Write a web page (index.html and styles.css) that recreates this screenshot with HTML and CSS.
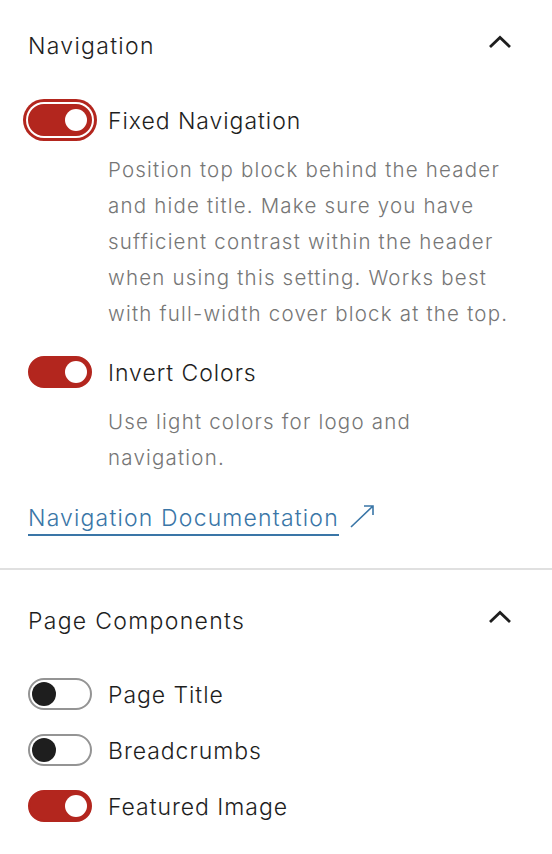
FILE: index.html
```html
<!DOCTYPE html>
<html>
<head>
<meta charset="utf-8">
<link rel="stylesheet" href="styles.css">
</head>
<body>
<div class="sidebar">
  <section class="panel panel-first">
    <div class="panel-header">
      <span class="panel-title">Navigation</span>
      <svg class="chevron" width="24" height="14" viewBox="0 0 24 14"><polyline points="2,12 12,2.5 22,12" fill="none" stroke="#1e1e1e" stroke-width="2.8"/></svg>
    </div>
    <div class="panel-body">
      <div class="control">
        <div class="toggle-row">
          <span class="toggle on focused"><span class="thumb"></span></span>
          <span class="label">Fixed Navigation</span>
        </div>
        <p class="help">Position top block behind the header and hide title. Make sure you have sufficient contrast within the header when using this setting. Works best with full-width cover block at the top.</p>
      </div>
      <div class="control">
        <div class="toggle-row">
          <span class="toggle on"><span class="thumb"></span></span>
          <span class="label">Invert Colors</span>
        </div>
        <p class="help">Use light colors for logo and<br>navigation.</p>
      </div>
      <a class="doc-link" href="#"><span class="doc-text">Navigation Documentation</span><svg class="ext" width="26" height="24" viewBox="0 0 26 24"><path d="M2 23 L24 2 M15 2 H24 V11" fill="none" stroke="#3a76a7" stroke-width="1.6"/></svg></a>
    </div>
  </section>
  <section class="panel panel-second">
    <div class="panel-header">
      <span class="panel-title">Page Components</span>
      <svg class="chevron" width="24" height="14" viewBox="0 0 24 14"><polyline points="2,12 12,2.5 22,12" fill="none" stroke="#1e1e1e" stroke-width="2.8"/></svg>
    </div>
    <div class="panel-body list">
      <div class="toggle-row">
        <span class="toggle"><span class="thumb"></span></span>
        <span class="label">Page Title</span>
      </div>
      <div class="toggle-row">
        <span class="toggle"><span class="thumb"></span></span>
        <span class="label">Breadcrumbs</span>
      </div>
      <div class="toggle-row">
        <span class="toggle on"><span class="thumb"></span></span>
        <span class="label">Featured Image</span>
      </div>
    </div>
  </section>
</div>
</body>
</html>
```

FILE: styles.css
```css
html, body {
  margin: 0;
  padding: 0;
  background: #ffffff;
}
body {
  font-family: Inter, "Noto Sans", sans-serif;
  font-weight: 350;
  color: #1e1e1e;
}
.sidebar {
  width: 552px;
}
.panel {
  padding: 0 28px;
}
.panel-second {
  border-top: 2px solid #e0e0e0;
  padding-top: 5px;
}
.panel-first {
  padding-bottom: 32px;
}
.panel-header {
  height: 90px;
  display: flex;
  align-items: center;
  justify-content: space-between;
}
.panel-title {
  font-size: 23px;
  line-height: 30px;
  letter-spacing: 1.3px;
  padding-top: 1px;
}
.chevron {
  display: block;
  margin-right: 12px;
  margin-top: -6px;
}
.panel-body {
  display: flex;
  flex-direction: column;
}
.panel-first .panel-body {
  padding-top: 14px;
  gap: 24px;
}
.panel-second .panel-body {
  padding-top: 13px;
  gap: 24px;
  padding-bottom: 40px;
}
.control {
  display: flex;
  flex-direction: column;
  gap: 16px;
}
.toggle-row {
  display: flex;
  align-items: center;
  gap: 16px;
  height: 32px;
}
.toggle {
  position: relative;
  box-sizing: border-box;
  width: 64px;
  height: 32px;
  border-radius: 16px;
  border: 2px solid #949494;
  background: #ffffff;
  flex: none;
}
.toggle .thumb {
  position: absolute;
  top: 2px;
  left: 2px;
  width: 24px;
  height: 24px;
  border-radius: 50%;
  background: #1e1e1e;
}
.toggle.on {
  background: #b3261e;
  border-color: #b3261e;
}
.toggle.on .thumb {
  left: auto;
  right: 3px;
  top: 3px;
  width: 22px;
  height: 22px;
  background: #ffffff;
}
.toggle.focused {
  box-shadow: 0 0 0 2px #ffffff, 0 0 0 5px #b3261e;
}
.label {
  font-size: 23px;
  line-height: 32px;
  letter-spacing: 0.95px;
  padding-top: 1px;
}
.help {
  margin: 0 0 0 80px;
  max-width: 410px;
  font-size: 20.5px;
  line-height: 36px;
  letter-spacing: 1.2px;
  color: #767676;
}
.doc-link {
  display: flex;
  align-items: center;
  gap: 10px;
  height: 36px;
  color: #3a76a7;
  text-decoration: none;
  font-size: 23px;
  letter-spacing: 1.17px;
  align-self: flex-start;
}
.doc-text {
  line-height: 32px;
  border-bottom: 2px solid #3a76a7;
  padding-top: 2px;
}
.ext {
  display: block;
  margin-top: -4px;
}
```
